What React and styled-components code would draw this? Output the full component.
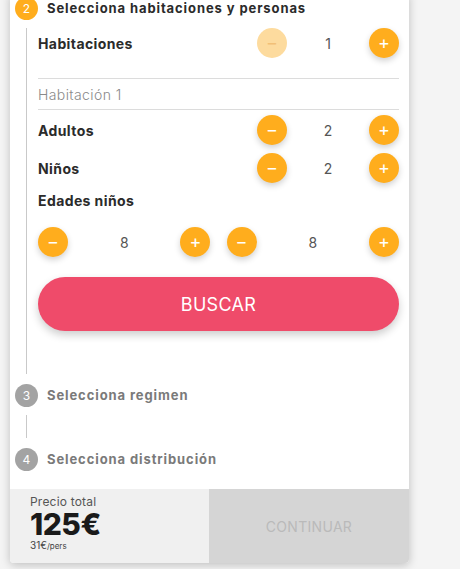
import React from "react";
import styled, { createGlobalStyle } from "styled-components";

const GlobalStyle = createGlobalStyle`
  body {
    margin: 0;
    background: #f4f4f4;
    font-family: Inter, "Noto Sans", sans-serif;
  }
`;

const Stepper = ({ value, minusDisabled }) => (
  <Counter>
    <RoundButton $disabled={minusDisabled}>−</RoundButton>
    <Value>{value}</Value>
    <RoundButton>+</RoundButton>
  </Counter>
);

const App = () => {
  return (
    <>
      <GlobalStyle />
      <Page>
        <Card>
          <Steps>
            <StepHeader>
              <StepNumber $active>2</StepNumber>
              <StepTitle $active>Selecciona habitaciones y personas</StepTitle>
            </StepHeader>
            <StepBody>
              <Row>
                <Label>Habitaciones</Label>
                <Stepper value={1} minusDisabled />
              </Row>
              <RoomTitle>Habitación 1</RoomTitle>
              <Row $top={5}>
                <Label>Adultos</Label>
                <Stepper value={2} />
              </Row>
              <Row $top={8}>
                <Label>Niños</Label>
                <Stepper value={2} />
              </Row>
              <AgesLabel>Edades niños</AgesLabel>
              <Ages>
                <Stepper value={8} />
                <Stepper value={8} />
              </Ages>
              <SearchButton>BUSCAR</SearchButton>
            </StepBody>

            <StepHeader>
              <StepNumber>3</StepNumber>
              <StepTitle>Selecciona regimen</StepTitle>
            </StepHeader>
            <StepBody $empty />

            <StepHeader>
              <StepNumber>4</StepNumber>
              <StepTitle>Selecciona distribución</StepTitle>
            </StepHeader>
          </Steps>

          <Footer>
            <Price>
              <PriceLabel>Precio total</PriceLabel>
              <PriceTotal>125€</PriceTotal>
              <PricePer>
                31€<small>/pers</small>
              </PricePer>
            </Price>
            <ContinueButton>CONTINUAR</ContinueButton>
          </Footer>
        </Card>
      </Page>
    </>
  );
};

const Page = styled.div`
  padding-left: 10px;
  height: 569px;
  overflow: hidden;
`;

const Card = styled.div`
  width: 399px;
  margin-top: -7px;
  background: #fff;
  border-radius: 0 0 4px 4px;
  box-shadow: 0 2px 10px rgba(0, 0, 0, 0.22);
  overflow: hidden;
`;

const Steps = styled.div`
  padding: 3px 10px 18px 5px;
`;

const StepHeader = styled.div`
  display: flex;
  align-items: center;
  height: 24px;
`;

const StepNumber = styled.div`
  width: 23px;
  height: 23px;
  border-radius: 50%;
  background: ${(p) => (p.$active ? "#ffad1d" : "#a3a3a3")};
  color: #fff;
  font-size: 12px;
  display: flex;
  align-items: center;
  justify-content: center;
  flex-shrink: 0;
`;

const StepTitle = styled.div`
  margin-left: 9px;
  font-size: 13px;
  font-weight: 700;
  letter-spacing: 0.9px;
  color: ${(p) => (p.$active ? "#2b2b2b" : "#7a7a7a")};
`;

const StepBody = styled.div`
  margin: 8px 0 9px 11px;
  border-left: 1px solid #c9c9c9;
  padding-left: 11px;
  padding-bottom: ${(p) => (p.$empty ? "23px" : "43px")};
`;

const Row = styled.div`
  display: flex;
  align-items: center;
  justify-content: space-between;
  height: 30px;
  margin-top: ${(p) => p.$top || 0}px;
`;

const Label = styled.div`
  font-size: 14px;
  font-weight: 700;
  letter-spacing: 0.4px;
  color: #2b2b2b;
`;

const Counter = styled.div`
  display: flex;
  align-items: center;
  justify-content: space-between;
  width: 142px;
`;

const RoundButton = styled.div`
  width: 30px;
  height: 30px;
  border-radius: 50%;
  background: ${(p) => (p.$disabled ? "#fddb9e" : "#ffad1d")};
  color: ${(p) => (p.$disabled ? "#f2c077" : "#fff")};
  box-shadow: ${(p) =>
    p.$disabled ? "none" : "0 3px 6px rgba(0, 0, 0, 0.18)"};
  display: flex;
  align-items: center;
  justify-content: center;
  font-size: 18px;
  line-height: 1;
`;

const Value = styled.div`
  font-size: 14px;
  color: #555;
`;

const RoomTitle = styled.div`
  margin-top: 20px;
  height: 30px;
  border-top: 1px solid #dcdcdc;
  border-bottom: 1px solid #dcdcdc;
  display: flex;
  align-items: center;
  font-size: 14px;
  font-weight: 300;
  letter-spacing: 0.4px;
  color: #8a8a8a;
`;

const AgesLabel = styled(Label)`
  margin-top: 9px;
  height: 18px;
  line-height: 18px;
`;

const Ages = styled.div`
  display: grid;
  grid-template-columns: 1fr 1fr;
  gap: 16px;
  margin-top: 17px;

  ${Counter} {
    width: auto;
  }
`;

const SearchButton = styled.div`
  margin-top: 20px;
  height: 54px;
  border-radius: 27px;
  background: #ef4b6a;
  color: #fff;
  font-size: 18px;
  letter-spacing: 0.3px;
  display: flex;
  align-items: center;
  justify-content: center;
  box-shadow: 0 4px 8px rgba(0, 0, 0, 0.2);
`;

const Footer = styled.div`
  display: grid;
  grid-template-columns: 199px 1fr;
  height: 74px;
`;

const Price = styled.div`
  background: #f0f0f0;
  padding: 5px 0 0 20px;
  color: #1a1a1a;
`;

const PriceLabel = styled.div`
  font-size: 12px;
  line-height: 15px;
  letter-spacing: 0.2px;
  color: #555;
`;

const PriceTotal = styled.div`
  font-size: 30px;
  font-weight: 800;
  line-height: 30px;
  letter-spacing: -0.5px;
`;

const PricePer = styled.div`
  font-size: 10px;
  line-height: 12px;
  color: #444;
  small {
    font-size: 8px;
  }
`;

const ContinueButton = styled.div`
  background: #d5d5d5;
  color: #bababa;
  font-size: 14px;
  letter-spacing: 0.3px;
  display: flex;
  align-items: center;
  justify-content: center;
`;

export default App;
